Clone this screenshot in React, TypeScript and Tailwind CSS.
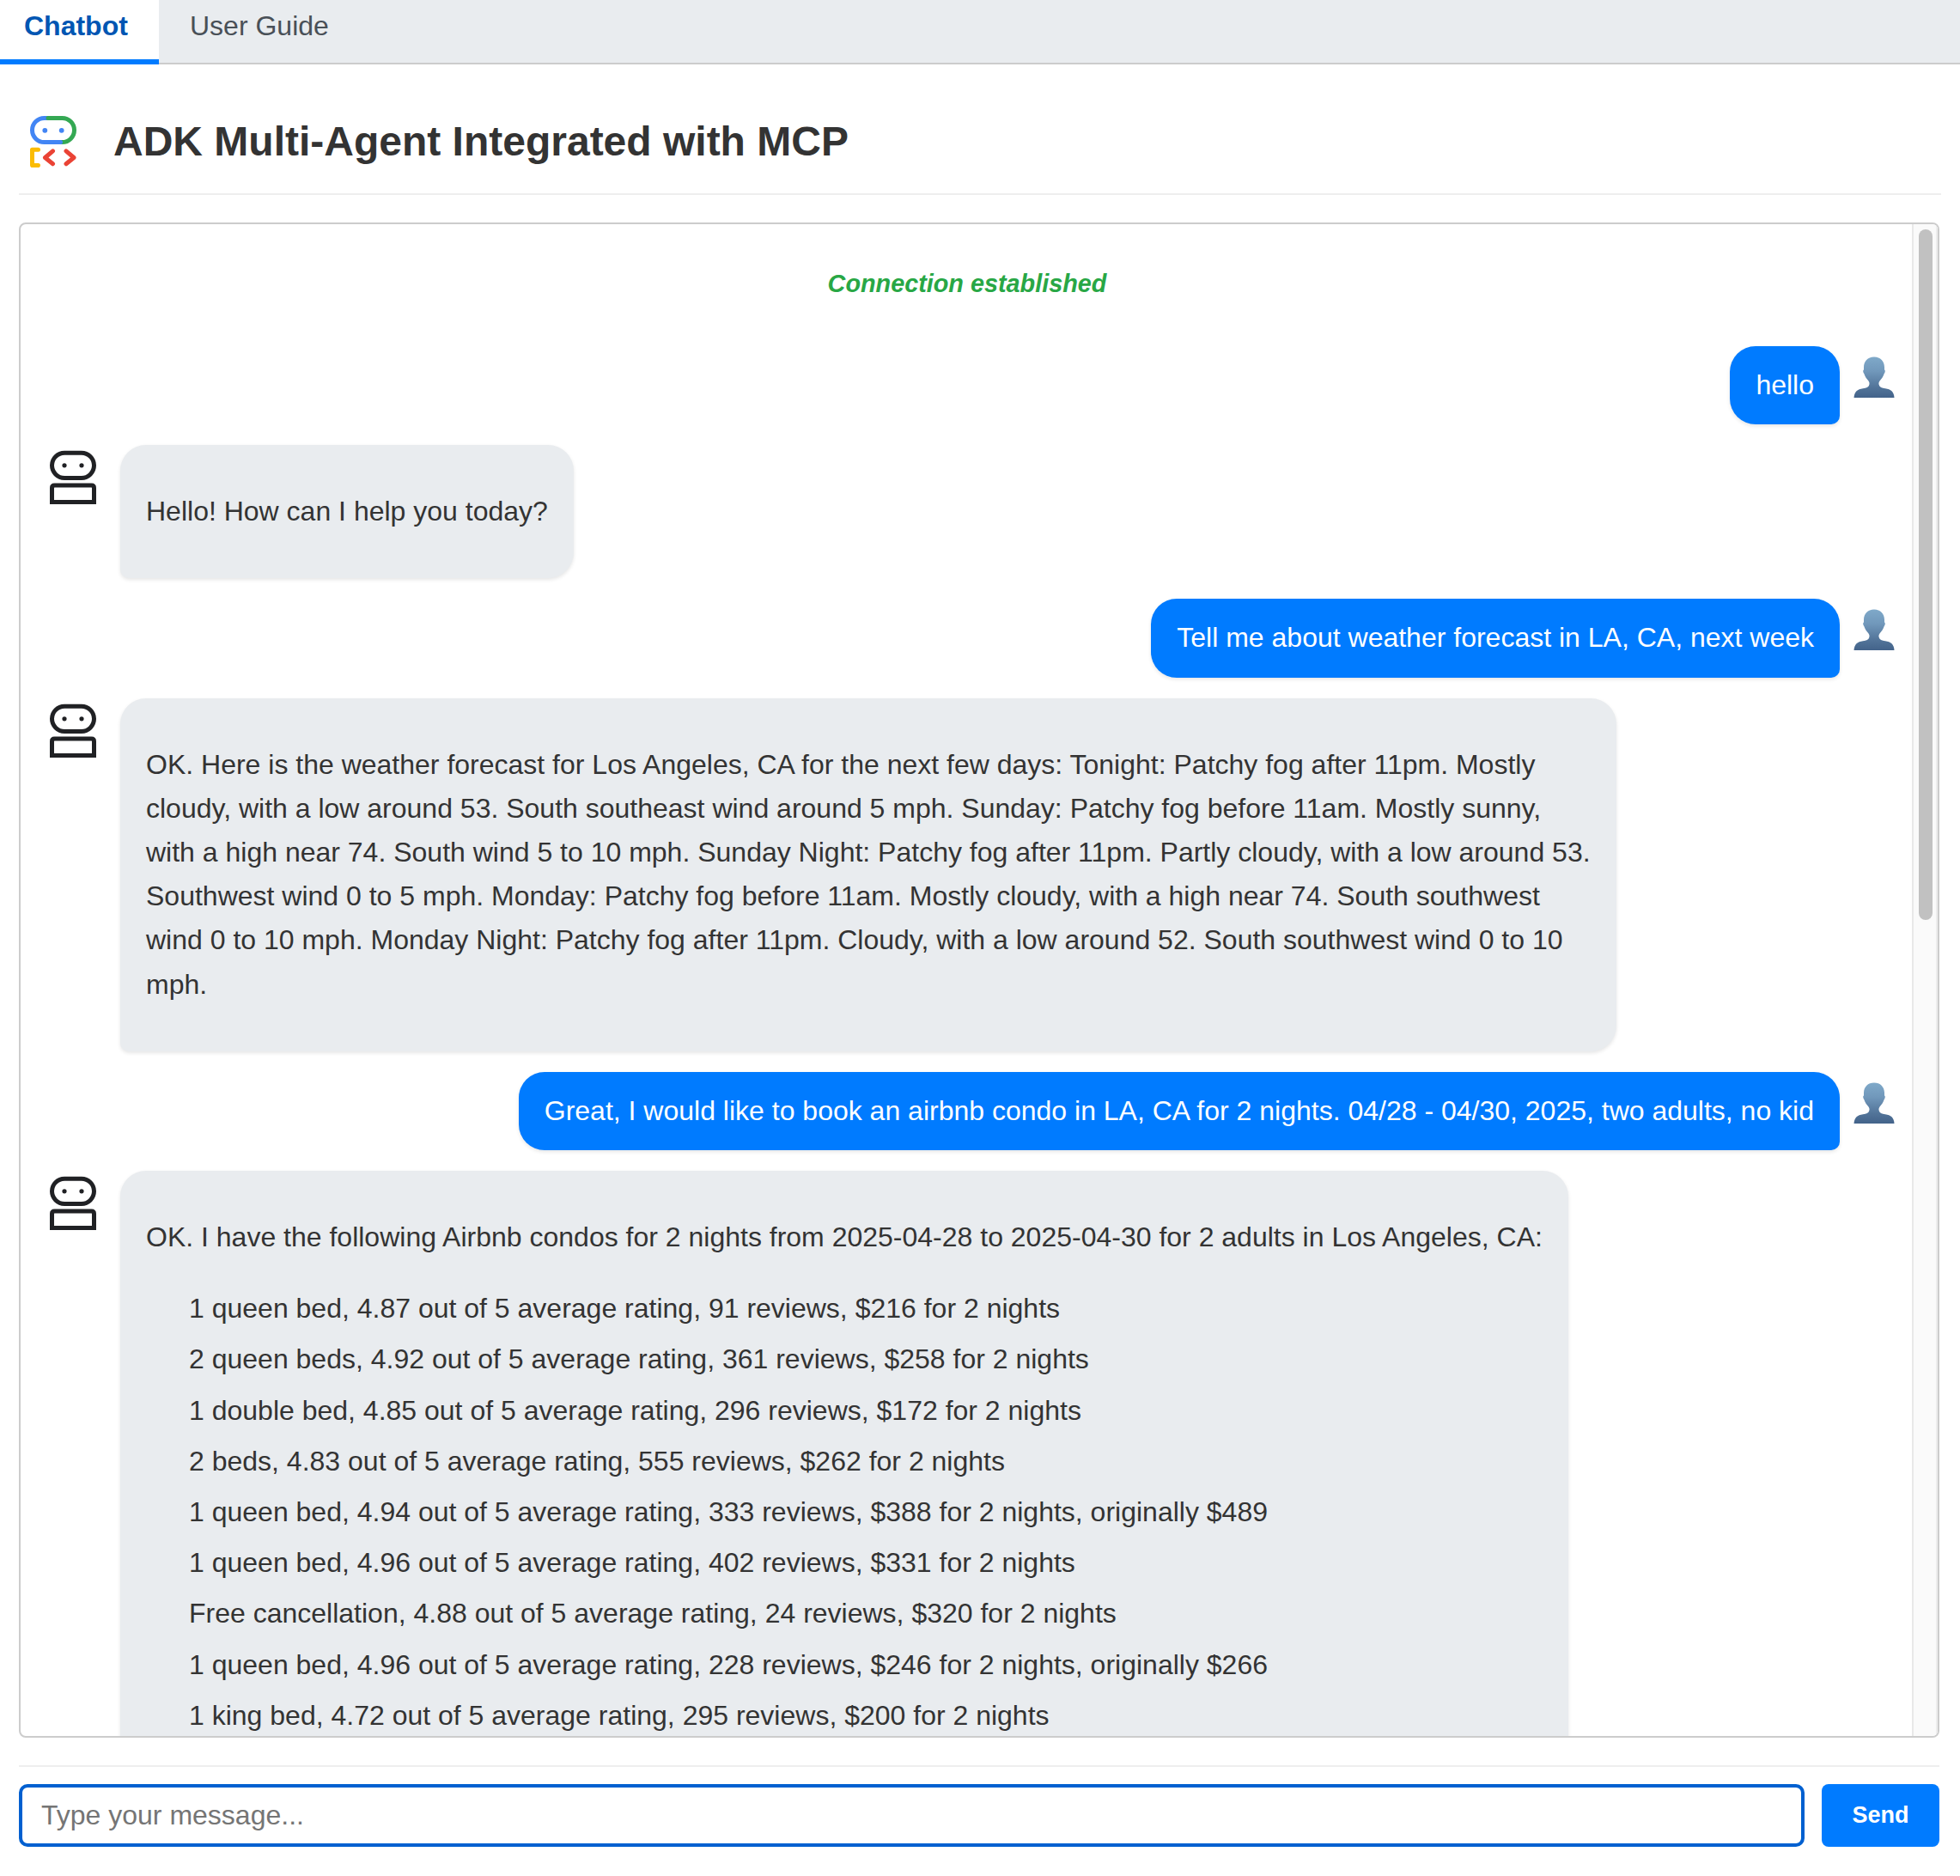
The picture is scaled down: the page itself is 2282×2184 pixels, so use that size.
import React from "react";

function LogoIcon() {
  return (
    <svg width="54" height="60" viewBox="0 0 54 60" fill="none" strokeWidth="5" strokeLinecap="round" strokeLinejoin="round" className="ml-[13px] mt-[1px] shrink-0">
      <path d="M20 2.500H16.500a14 14 0 0 0 0 28H36" stroke="#4285f4" />
      <path d="M21 2.500H37.500a14 14 0 0 1 0 28" stroke="#34a853" />
      <path d="M30 30.500H35.500" stroke="#4285f4" />
      <circle cx="17.300" cy="16.800" r="2.900" fill="#4285f4" />
      <circle cx="36.700" cy="16.800" r="2.900" fill="#4285f4" />
      <path d="M9.500 39.300H2.500v18.300h7" stroke="#fbbc04" />
      <path d="M26.500 40.800 17.500 48.500l9 7.300M42 40.800l9 7.700-9 7.300" stroke="#ea4335" />
    </svg>
  );
}

function BotIcon() {
  return (
    <svg width="54" height="64" viewBox="0 0 54 64" fill="none" stroke="#202124" strokeWidth="5" className="ml-1 mt-[6px] shrink-0">
      <rect x="2.500" y="3.200" width="49" height="29.300" rx="14.650" />
      <path d="M2.500 60.500V44q0-3 3-3h43q3 0 3 3v16.500z" />
      <circle cx="17" cy="17.800" r="2.600" fill="#202124" stroke="none" />
      <circle cx="37" cy="17.800" r="2.600" fill="#202124" stroke="none" />
    </svg>
  );
}

function UserIcon() {
  return (
    <svg width="48" height="49" viewBox="0 0 48 49" className="ml-4 mt-3 shrink-0">
      <defs>
        <linearGradient id="person" x1="0" y1="0" x2="0" y2="1">
          <stop offset="0" stopColor="#7fa9c9" />
          <stop offset="0.350" stopColor="#7198bb" />
          <stop offset="0.750" stopColor="#527499" />
          <stop offset="1" stopColor="#43638a" />
        </linearGradient>
      </defs>
      <path
        fill="url(#person)"
        d="M24 0.500C31.500 0.500 36 5.500 36 12.500V15.500C37.200 15.800 37 18.500 35.700 20C34.500 23.500 32.700 26 30.500 28.500C29.300 30 29.300 31.500 29.700 33C30.300 35.500 33 36.800 37 37.200C43.500 38 47 41 47.500 48H0.500C1 41 4.500 38 11 37.200C15 36.800 17.700 35.500 18.300 33C18.700 31.500 18.700 30 17.500 28.500C15.300 26 13.500 23.500 12.300 20C11 18.500 10.800 15.800 12 15.500V12.500C12 5.500 16.500 0.500 24 0.500Z"
      />
    </svg>
  );
}

function UserMessage({ children }: { children: React.ReactNode }) {
  return (
    <div className="flex shrink-0 items-start justify-end">
      <div className="rounded-[30px] rounded-br-[10px] bg-[#007bff] px-[30px] py-5 text-white shadow-[0_2px_4px_rgba(0,0,0,0.1)]">
        {children}
      </div>
      <UserIcon />
    </div>
  );
}

function BotMessage({ children, width }: { children: React.ReactNode; width: string }) {
  return (
    <div className="flex shrink-0 items-start">
      <BotIcon />
      <div className={`ml-7 rounded-[30px] rounded-bl-[10px] bg-[#e9ecef] px-[30px] py-[52px] shadow-[0_2px_4px_rgba(0,0,0,0.1)] ${width}`}>
        {children}
      </div>
    </div>
  );
}

const forecast = [
  "OK. Here is the weather forecast for Los Angeles, CA for the next few days: Tonight: Patchy fog after 11pm. Mostly",
  "cloudy, with a low around 53. South southeast wind around 5 mph. Sunday: Patchy fog before 11am. Mostly sunny,",
  "with a high near 74. South wind 5 to 10 mph. Sunday Night: Patchy fog after 11pm. Partly cloudy, with a low around 53.",
  "Southwest wind 0 to 5 mph. Monday: Patchy fog before 11am. Mostly cloudy, with a high near 74. South southwest",
  "wind 0 to 10 mph. Monday Night: Patchy fog after 11pm. Cloudy, with a low around 52. South southwest wind 0 to 10",
  "mph.",
];

const condos = [
  "1 queen bed, 4.87 out of 5 average rating, 91 reviews, $216 for 2 nights",
  "2 queen beds, 4.92 out of 5 average rating, 361 reviews, $258 for 2 nights",
  "1 double bed, 4.85 out of 5 average rating, 296 reviews, $172 for 2 nights",
  "2 beds, 4.83 out of 5 average rating, 555 reviews, $262 for 2 nights",
  "1 queen bed, 4.94 out of 5 average rating, 333 reviews, $388 for 2 nights, originally $489",
  "1 queen bed, 4.96 out of 5 average rating, 402 reviews, $331 for 2 nights",
  "Free cancellation, 4.88 out of 5 average rating, 24 reviews, $320 for 2 nights",
  "1 queen bed, 4.96 out of 5 average rating, 228 reviews, $246 for 2 nights, originally $266",
  "1 king bed, 4.72 out of 5 average rating, 295 reviews, $200 for 2 nights",
];

export default function App() {
  return (
    <div className="flex h-[2184px] w-[2282px] flex-col overflow-hidden bg-white font-['Liberation_Sans',Arial,sans-serif] text-[32px] leading-[51.2px] text-[#333]">
      <nav className="flex h-[75px] shrink-0">
        <div className="w-[185px] border-b-[6px] border-[#007bff] bg-white pl-7 pt-[5px] font-bold text-[#0056b3]">Chatbot</div>
        <div className="flex-1 border-b-2 border-[#ccc] bg-[#e9ecef] pl-9 pt-[5px] text-[#495057]">User Guide</div>
      </nav>

      <div className="mx-[22px] flex min-h-0 flex-1 flex-col">
        <header className="flex h-[152px] shrink-0 border-b-2 border-[#eee] pt-[59px]">
          <LogoIcon />
          <h1 className="ml-[43px] mt-[-8px] text-[48px] font-bold leading-[77px]">ADK Multi-Agent Integrated with MCP</h1>
        </header>

        <main className="mr-[2px] mt-8 flex h-[1764px] shrink-0 overflow-hidden rounded-[8px] border-2 border-[#ccc]">
          <div className="flex min-w-0 flex-1 flex-col gap-6 overflow-hidden pl-[30px] pr-5">
            <div className="mt-[44px] h-[74px] shrink-0 pr-2 text-center text-[28.8px] font-bold italic leading-[51.2px] text-[#28a745]">Connection established</div>
            <UserMessage>hello</UserMessage>
            <BotMessage width="w-[528px]">Hello! How can I help you today?</BotMessage>
            <UserMessage>Tell me about weather forecast in LA, CA, next week</UserMessage>
            <BotMessage width="w-[1742px]">
              {forecast.map((line) => (
                <p key={line} className="whitespace-nowrap">{line}</p>
              ))}
            </BotMessage>
            <UserMessage>Great, I would like to book an airbnb condo in LA, CA for 2 nights. 04/28 - 04/30, 2025, two adults, no kid</UserMessage>
            <BotMessage width="w-[1686px]">
              <p className="whitespace-nowrap">OK. I have the following Airbnb condos for 2 nights from 2025-04-28 to 2025-04-30 for 2 adults in Los Angeles, CA:</p>
              <ul className="mt-8 flex flex-col gap-2 pl-[50px]">
                {condos.map((condo) => (
                  <li key={condo}>{condo}</li>
                ))}
              </ul>
            </BotMessage>
          </div>
          <div className="w-[30px] shrink-0 border-x-2 border-l-[#e8e8e8] border-r-[#ededed] bg-[#fafafa] pl-[6px] pt-[6px]">
            <div className="h-[804px] w-4 rounded-full bg-[#c1c1c1]" />
          </div>
        </main>

        <form className="mr-[2px] mt-8 flex shrink-0 gap-5 border-t-2 border-[#eee] pt-5">
          <input placeholder="Type your message..." className="h-[73px] min-w-0 flex-1 rounded-[10px] border-4 border-[#0060d0] bg-white px-[22px] placeholder:text-[#757575]" />
          <button type="button" className="h-[73px] w-[137px] rounded-[8px] bg-[#007bff] text-[27px] font-bold text-white">Send</button>
        </form>
      </div>
    </div>
  );
}
